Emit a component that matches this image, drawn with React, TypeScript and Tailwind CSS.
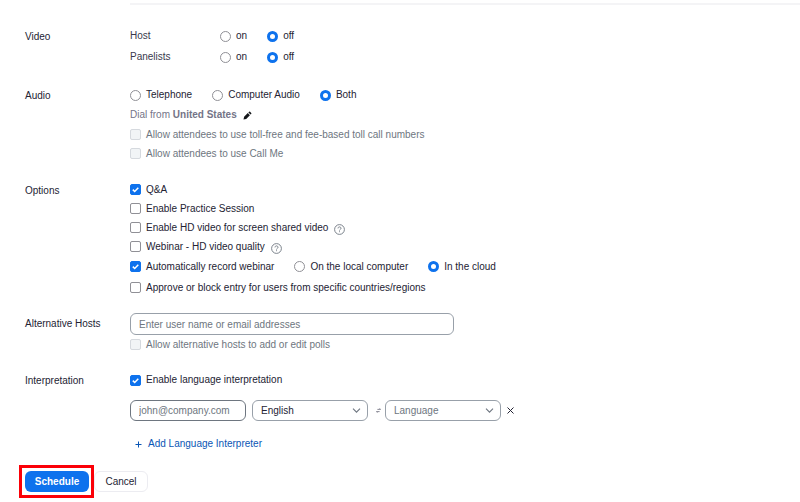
import { ReactNode, useState } from "react";
import { clsx } from "clsx";

export default function App() {
  const [hostVideo, setHostVideo] = useState("off");
  const [panelistVideo, setPanelistVideo] = useState("off");
  const [audio, setAudio] = useState("Both");
  const [recordTo, setRecordTo] = useState("In the cloud");

  return (
    <form className="bg-white pb-1 font-['Liberation_Sans',sans-serif] text-[10px] leading-5 text-[#232333]" onSubmit={(event) => event.preventDefault()}>
      <div className="ml-[130px] pt-[3px]">
        <hr className="h-0 border-t-2 border-[#f4f4f6]" />
      </div>

      <Section title="Video" className="mt-[21px] flex flex-col gap-px">
        <OnOffRow label="Host" name="host-video" value={hostVideo} onChange={setHostVideo} />
        <OnOffRow label="Panelists" name="panelist-video" value={panelistVideo} onChange={setPanelistVideo} />
      </Section>

      <Section title="Audio" className="mt-[18px]">
        <div className="flex h-5 items-center gap-5" role="radiogroup" aria-label="Audio">
          {["Telephone", "Computer Audio", "Both"].map((item) => (
            <Radio key={item} name="audio" label={item} checked={audio === item} onChange={() => setAudio(item)} />
          ))}
        </div>
        <div className="flex h-5 items-center gap-1.5 text-[#747487]">
          <span>Dial from <b className="font-semibold">United States</b></span>
          <button type="button" aria-label="Edit dial-in country"><PencilIcon /></button>
        </div>
        <Checkbox label="Allow attendees to use toll-free and fee-based toll call numbers" disabled />
        <Checkbox label="Allow attendees to use Call Me" disabled />
      </Section>

      <Section title="Options" className="mt-[17px]">
        <Checkbox label="Q&A" defaultChecked />
        <Checkbox label="Enable Practice Session" />
        <div className="flex items-center gap-1.5">
          <Checkbox label="Enable HD video for screen shared video" />
          <HelpButton label="About screen share quality" />
        </div>
        <div className="flex items-center gap-1.5">
          <Checkbox label="Webinar - HD video quality" />
          <HelpButton label="About webinar quality" />
        </div>
        <div className="flex h-[21px] items-center gap-5">
          <Checkbox label="Automatically record webinar" defaultChecked />
          {["On the local computer", "In the cloud"].map((item) => (
            <Radio key={item} name="record" label={item} checked={recordTo === item} onChange={() => setRecordTo(item)} />
          ))}
        </div>
        <div className="flex h-[21px] items-center">
          <Checkbox label="Approve or block entry for users from specific countries/regions" />
        </div>
      </Section>

      <Section title="Alternative Hosts" htmlFor="alt-hosts" className="mt-[15px]">
        <input id="alt-hosts" type="text" placeholder="Enter user name or email addresses" className="block h-[22px] w-full max-w-[324px] rounded-md border border-[#98a0a9] px-2 placeholder:text-[#6e7680]" />
        <Checkbox label="Allow alternative hosts to add or edit polls" disabled />
      </Section>

      <Section title="Interpretation" className="mt-4">
        <div className="flex h-5 items-center">
          <Checkbox label="Enable language interpretation" defaultChecked />
        </div>
        <div className="mt-[10px] flex items-center">
          <input type="email" aria-label="Interpreter email" placeholder="john@company.com" className="h-[21px] w-[116px] rounded-md border border-[#6e7680] px-2 placeholder:text-[#6e7680]" />
          <Select label="Source language" options={["English", "French", "Spanish"]} className="ml-[6px]" />
          <SwapIcon />
          <Select label="Target language" options={["Language", "French", "Spanish"]} className="text-[#6e7680]" />
          <button type="button" aria-label="Remove interpreter" className="ml-[5px]">
            <svg className="size-[9px]" viewBox="0 0 9 9" fill="none" stroke="#232333" strokeWidth="1">
              <path d="M1.5 1.5l6 6M7.5 1.5l-6 6" />
            </svg>
          </button>
        </div>
        <button type="button" className="mt-3 ml-[5px] flex h-[22px] items-center gap-1.5 font-medium text-[#0956b5]">
          <svg className="size-[7px]" viewBox="0 0 7 7" fill="none" stroke="currentColor">
            <path d="M3.5 0.5v6M0.5 3.5h6" />
          </svg>
          Add Language Interpreter
        </button>
      </Section>

      <div className="mt-[10px] flex items-center pl-[19px]">
        <div className="border-[3px] border-[#fb0007] p-[3px] pr-[2px]">
          <button type="submit" className="block h-[21px] w-16 rounded-md bg-[#0e72ed] font-semibold text-white">Schedule</button>
        </div>
        <button type="button" className="h-[21px] w-[54px] rounded-md border border-[#ececf1] font-medium">Cancel</button>
      </div>
    </form>
  );
}

function Section({ title, htmlFor, className, children }: { title: string; htmlFor?: string; className?: string; children: ReactNode }) {
  return (
    <section className="flex pl-[25px]">
      <div className={clsx("w-[105px] shrink-0 leading-[22px]", className)}>
        {htmlFor ? <label htmlFor={htmlFor}>{title}</label> : <h2>{title}</h2>}
      </div>
      <div className={clsx("min-w-0 flex-1", className)}>{children}</div>
    </section>
  );
}

function OnOffRow({ label, name, value, onChange }: { label: string; name: string; value: string; onChange: (value: string) => void }) {
  return (
    <div className="flex h-5 items-center gap-5" role="radiogroup" aria-label={label}>
      <span className="w-[70px] text-[#39394d]">{label}</span>
      <Radio name={name} label="on" checked={value === "on"} onChange={() => onChange("on")} />
      <Radio name={name} label="off" checked={value === "off"} onChange={() => onChange("off")} />
    </div>
  );
}

function Radio({ name, label, checked, onChange }: { name: string; label: string; checked: boolean; onChange: () => void }) {
  return (
    <label className="flex items-center gap-[5px]">
      <input type="radio" name={name} checked={checked} onChange={onChange} className="size-[11px] appearance-none rounded-full border border-[#909096] bg-white checked:border-[3px] checked:border-[#0e72ed]" />
      {label}
    </label>
  );
}

function Checkbox({ label, disabled, defaultChecked }: { label: string; disabled?: boolean; defaultChecked?: boolean }) {
  return (
    <label className={clsx("flex h-[19px] items-center gap-[5px]", disabled && "text-[#6e7680]")}>
      <span className="grid shrink-0 place-items-center">
        <input type="checkbox" disabled={disabled} defaultChecked={defaultChecked} className="peer col-start-1 row-start-1 size-[11px] appearance-none rounded-[2px] border border-[#909096] bg-white checked:border-[#0e72ed] checked:bg-[#0e72ed] disabled:border-[#d5d9de] disabled:bg-[#f1f4f6]" />
        <svg className="invisible pointer-events-none col-start-1 row-start-1 size-[11px] peer-checked:visible" viewBox="0 0 11 11" fill="none" stroke="#fff" strokeWidth="1.5">
          <path d="M2.8 5.6l1.9 1.9 3.6-3.8" />
        </svg>
      </span>
      {label}
    </label>
  );
}

function Select({ label, options, className }: { label: string; options: string[]; className?: string }) {
  return (
    <div className={clsx("relative w-[116px]", className)}>
      <select aria-label={label} className="block h-[21px] w-full appearance-none rounded-md border border-[#98a0a9] bg-white px-2 leading-[19px]">
        {options.map((option) => <option key={option}>{option}</option>)}
      </select>
      <svg className="pointer-events-none absolute top-[7px] right-[7px] h-[7px] w-[9px]" viewBox="0 0 9 7" fill="none" stroke="#6e7680" strokeWidth="1.1">
        <path d="M1 1.7l3.5 3.5L8 1.7" />
      </svg>
    </div>
  );
}

function HelpButton({ label }: { label: string }) {
  return (
    <button type="button" aria-label={label} className="pt-[3px]">
      <svg className="block size-[11px]" viewBox="0 0 11 11" fill="none" stroke="#6e7680">
        <circle cx="5.5" cy="5.5" r="4.9" strokeWidth="0.9" />
        <path d="M4 4.4c0-2 3-2 3 0 0 1-1.5 1-1.5 2.1M5.5 7.3v0.9" strokeWidth="0.9" />
      </svg>
    </button>
  );
}

function PencilIcon() {
  return (
    <svg className="block size-[9px]" viewBox="0 0 9 9" fill="#131619">
      <path d="M0.5 8.5l0.6-2.7 3.7-3.7 2.1 2.1-3.7 3.7zM5.4 1.5l0.7-0.7q0.5-0.5 1 0l1.1 1.1q0.5 0.5 0 1l-0.7 0.7z" />
    </svg>
  );
}

function SwapIcon() {
  return (
    <svg className="mr-1 ml-2 size-[5px]" viewBox="0 0 5 5" fill="none" stroke="#39394d" strokeWidth="0.6">
      <path d="M1.4 1.4h3.2L3.6 0.4M3.6 3.6H0.4l1 1" />
    </svg>
  );
}
